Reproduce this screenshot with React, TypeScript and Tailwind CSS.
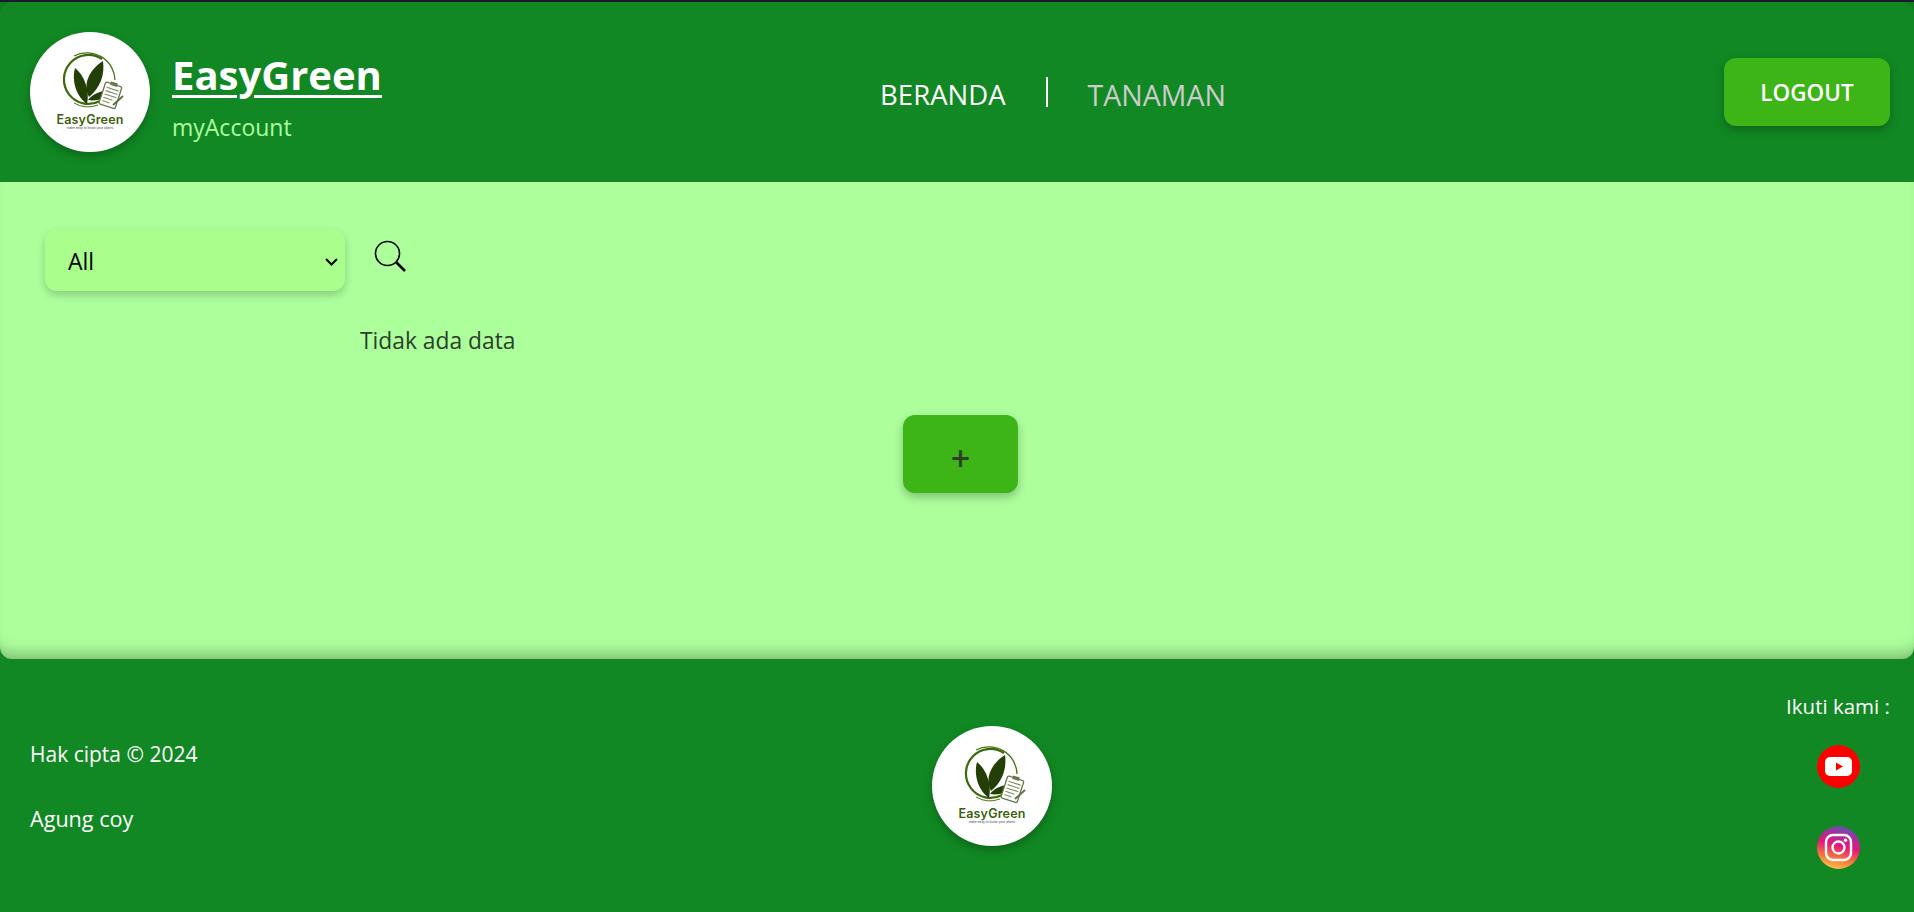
import React from "react";

const font = { fontFamily: '"Open Sans", "Noto Sans", sans-serif' };

function Logo({ size }: { size: number }) {
  return (
    <svg width={size} height={size} viewBox="0 0 120 120">
      <path d="M72 27 A24.5 24.5 0 1 0 70 69" fill="none" stroke="#3b6a0c" strokeWidth="2.2" />
      <path d="M44 24 A28 28 0 0 1 85 48" fill="none" stroke="#4a7318" strokeWidth="1.3" />
      <path d="M68 73 A28 28 0 0 1 44 71" fill="none" stroke="#4a7318" strokeWidth="1" />
      <path d="M45 36 C54 43 60 58 57 72 C48 66 41 51 45 36 Z" fill="#233f05" />
      <path d="M73 29 C75 43 70 56 59 65 C52 52 60 37 73 29 Z" fill="#233f05" />
      <path d="M58 68 C63 61 73 58 84 58 C78 65 68 70 58 68 Z" fill="#233f05" />
      <g transform="rotate(18 81 63)">
        <rect x="72" y="52" width="17" height="23" rx="1.5" fill="#fff" stroke="#66794a" strokeWidth="1.3" />
        <rect x="77" y="50" width="7" height="3.5" fill="#66794a" />
        <path d="M74.5 57 H87 M74.5 60.5 H87 M74.5 64 H87 M74.5 67.5 H84 M74.5 71 H82" stroke="#7d8f62" strokeWidth="1.1" />
      </g>
      <path d="M83 73 L93 64" stroke="#5c7040" strokeWidth="1.8" />
      <text x="60" y="92" textAnchor="middle" fontSize="12.5" fontWeight="600" letterSpacing="0.2" fill="#3b5f0c" fontFamily="Inter, sans-serif">EasyGreen</text>
      <text x="60" y="97" textAnchor="middle" fontSize="3.2" fill="#444" fontFamily="Inter, sans-serif">make easy to know your plants</text>
    </svg>
  );
}

function YoutubeIcon() {
  return (
    <svg width="43" height="43" viewBox="0 0 43 43">
      <circle cx="21.5" cy="21.5" r="21.5" fill="#ff0000" />
      <rect x="8" y="12" width="27" height="19" rx="5" fill="#fff" />
      <path d="M19 17.5 L26 21.5 L19 25.5 Z" fill="#ff0000" />
    </svg>
  );
}

function InstagramIcon() {
  return (
    <svg width="43" height="43" viewBox="0 0 43 43">
      <defs>
        <linearGradient id="ig" x1="0.35" y1="1" x2="0.6" y2="0">
          <stop offset="0" stopColor="#fdc34d" />
          <stop offset="0.25" stopColor="#f5793a" />
          <stop offset="0.55" stopColor="#e3177d" />
          <stop offset="0.8" stopColor="#a52f9c" />
          <stop offset="1" stopColor="#5b57b0" />
        </linearGradient>
      </defs>
      <circle cx="21.5" cy="21.5" r="21.5" fill="url(#ig)" />
      <rect x="9" y="9" width="25" height="25" rx="7" fill="none" stroke="#fff" strokeWidth="2.4" />
      <circle cx="21.5" cy="21.5" r="6" fill="none" stroke="#fff" strokeWidth="2.4" />
      <circle cx="28.5" cy="14.2" r="1.7" fill="#fff" />
    </svg>
  );
}

export default function App() {
  return (
    <div style={font} className="h-[912px] bg-[#118823] border-t-2 border-[#1c1c2a] overflow-hidden text-white">
      {/* Header */}
      <div className="bg-[#0f7d20]">
        <header className="h-[180px] bg-[#118823] rounded-t-xl flex items-center justify-between pl-[30px] pr-6">
          <div className="flex items-center gap-[22px]">
            <div className="w-[120px] h-[120px] rounded-full bg-white shadow-[0_4px_10px_rgba(0,0,0,0.25)] overflow-hidden">
              <Logo size={120} />
            </div>
            <div className="w-[210px] pt-[7px]">
              <h1 className="text-[40px] leading-[50px] font-bold underline decoration-[3px] underline-offset-[5px]">EasyGreen</h1>
              <p className="mt-[12px] text-[23px] leading-[30px] text-[#adff9e]">myAccount</p>
            </div>
          </div>
          <nav className="flex items-start mt-[5px] text-[27.5px] leading-[36px]">
            <a className="text-white">BERANDA</a>
            <span className="mx-[40px] w-[2px] h-[30px] bg-white" />
            <a className="text-[#cccccc] text-[28.5px]">TANAMAN</a>
          </nav>
          <button className="w-[166px] h-[68px] pt-[2px] rounded-xl bg-[#3db517] text-[22.5px] font-semibold text-white shadow-[0_4px_10px_rgba(0,0,0,0.25)]">
            LOGOUT
          </button>
        </header>
      </div>

      {/* Main */}
      <main className="h-[477px] bg-[#adff9c] rounded-b-xl shadow-[inset_0_-16px_16px_-12px_rgba(0,0,0,0.3)] pt-[47px]">
        <div className="flex items-start pl-[45px]">
          <div className="relative w-[300px] h-[62px]">
            <select className="appearance-none w-full h-full pl-[23px] pt-[2px] rounded-xl bg-[#aaff8c] text-[23px] text-black outline-none shadow-[0_4px_8px_rgba(0,0,0,0.2)]">
              <option>All</option>
            </select>
            <svg className="absolute right-[7px] top-[29px]" width="13" height="8" viewBox="0 0 13 8" fill="none" stroke="#000" strokeWidth="2">
              <path d="M1 1 L6.5 6.5 L12 1" />
            </svg>
          </div>
          <svg className="ml-[29px] mt-[11px]" width="33" height="33" viewBox="0 0 33 33" fill="none" stroke="#000">
            <circle cx="13.5" cy="13.5" r="12" strokeWidth="1.6" />
            <path d="M22 22 L31 31" strokeWidth="2.6" />
          </svg>
        </div>
        <p className="ml-[360px] mt-[34px] text-[22.8px] leading-[32px] text-[#2b3f2b]">Tidak ada data</p>
        <div className="flex justify-center pl-[7px] mt-[58px]">
          <button className="w-[115px] h-[78px] rounded-xl bg-[#3db517] text-[34px] font-semibold leading-[34px] pt-[7px] text-[#2b3f2b] shadow-[0_4px_10px_rgba(0,0,0,0.25)]">
            +
          </button>
        </div>
      </main>

      {/* Footer */}
      <footer className="h-[253px] flex justify-between pl-[30px] pr-6">
        <div className="pt-[79px] text-[21px] leading-[32px]">
          <p>Hak cipta © 2024</p>
          <p className="mt-[33px] text-[21.6px]">Agung coy</p>
        </div>
        <div className="pt-[67px]">
          <div className="w-[120px] h-[120px] rounded-full bg-white shadow-[0_4px_10px_rgba(0,0,0,0.25)] overflow-hidden">
            <Logo size={120} />
          </div>
        </div>
        <div className="pt-[31px] flex flex-col items-center">
          <p className="text-[20.5px] leading-[32px]">Ikuti kami :</p>
          <div className="mt-[23px]"><YoutubeIcon /></div>
          <div className="mt-[38px]"><InstagramIcon /></div>
        </div>
      </footer>
    </div>
  );
}
